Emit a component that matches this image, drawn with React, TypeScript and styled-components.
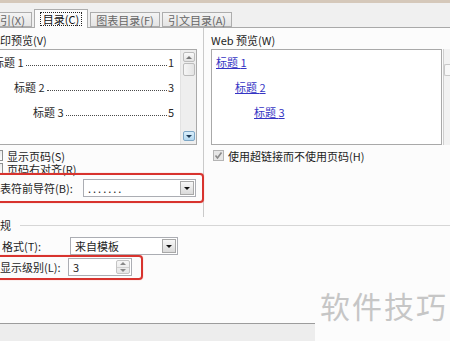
import styled, { createGlobalStyle } from "styled-components";

const GlobalStyle = createGlobalStyle`
  html, body {
    margin: 0;
    padding: 0;
    background: #fcfcfc;
  }
  body {
    font-family: "Noto Sans CJK SC", "Liberation Sans", sans-serif;
    font-size: 11px;
    color: #1e1e1e;
  }
`;

const Page = styled.div`
  width: 450px;
  height: 341px;
  overflow: hidden;
  display: flex;
  flex-direction: column;
  background: #fcfcfc;
`;

const TopStrip = styled.div`
  height: 3px;
  background: #d5c8ba;
`;

const Frame = styled.div`
  margin-left: -11px;
  width: 461px;
  flex: 1;
  display: flex;
  flex-direction: column;
`;

const TabBar = styled.div`
  height: 24px;
  box-sizing: content-box;
  background: #f0f0f0;
  border-bottom: 1px solid #a9a9a9;
  display: flex;
  align-items: flex-end;
  gap: 2px;
`;

const Tab = styled.div<{ $w: number; $active?: boolean; $first?: boolean }>`
  width: ${(p) => p.$w}px;
  height: ${(p) => (p.$active ? 19 : 15)}px;
  margin-bottom: ${(p) => (p.$active ? -1 : 0)}px;
  margin-left: ${(p) => (p.$first ? -7 : 0)}px;
  box-sizing: border-box;
  border: 1px solid #adadad;
  border-bottom: ${(p) => (p.$active ? "none" : "1px solid #adadad")};
  background: ${(p) =>
    p.$active ? "#fcfcfc" : "linear-gradient(#f4f4f4, #e4e4e4)"};
  color: ${(p) => (p.$active ? "#111" : "#666")};
  display: flex;
  align-items: center;
  justify-content: center;
  line-height: 12px;
  white-space: nowrap;
`;

const Focus = styled.span`
  outline: 1px dotted #222;
  padding: 0 2px;
`;

const TopRow = styled.div`
  display: flex;
  height: 189px;
`;

const LeftCol = styled.div`
  width: 216px;
  padding-top: 5px;
  display: flex;
  flex-direction: column;
`;

const RightCol = styled.div`
  flex: 1;
  border-left: 1px solid #cacaca;
  padding: 5px 0 0 7px;
  display: flex;
  flex-direction: column;
`;

const Label = styled.div`
  height: 14px;
  line-height: 14px;
  white-space: nowrap;
`;

const PreviewRow = styled.div`
  margin-top: 2px;
  height: 96px;
  display: flex;
  gap: 1px;
`;

const PreviewBox = styled.div<{ $w: number }>`
  width: ${(p) => p.$w}px;
  height: 96px;
  box-sizing: border-box;
  border: 1px solid #a9a9a9;
  background: #fff;
  display: flex;
`;

const Entries = styled.div`
  flex: 1;
  padding: 6px 6px 0 3px;
  display: flex;
  flex-direction: column;
  gap: 12px;
`;

const Entry = styled.div<{ $indent: number }>`
  display: flex;
  align-items: flex-end;
  height: 13px;
  line-height: 13px;
  padding-left: ${(p) => p.$indent}px;
  color: #2a2a2a;
  white-space: nowrap;
`;

const Leader = styled.span`
  flex: 1;
  border-bottom: 1px dotted #4a4a4a;
  margin: 0 1px 3px 2px;
`;

const WebEntry = styled.span<{ $indent: number }>`
  display: block;
  height: 13px;
  line-height: 13px;
  padding-left: ${(p) => p.$indent}px;
  color: #3535c4;
  text-decoration: underline;
  white-space: nowrap;
`;

const Scrollbar = styled.div`
  width: 15px;
  background: #eeeeee;
  border-left: 1px solid #e2e2e2;
  display: flex;
  flex-direction: column;
  align-items: center;
  padding: 2px 0 3px;
`;

const ScrollBtn = styled.div<{ $hover?: boolean }>`
  width: 12px;
  height: 10px;
  box-sizing: border-box;
  border: 1px solid ${(p) => (p.$hover ? "#7ea7c6" : "#bcbcbc")};
  border-radius: 2px;
  background: ${(p) =>
    p.$hover
      ? "linear-gradient(#d9eefb, #b4d8f0)"
      : "linear-gradient(#fafafa, #e2e2e2)"};
  display: flex;
  align-items: center;
  justify-content: center;
`;

const Thumb = styled.div`
  width: 12px;
  height: 13px;
  margin-top: 1px;
  box-sizing: border-box;
  border: 1px solid #bcbcbc;
  border-radius: 2px;
  background: linear-gradient(90deg, #f6f6f6, #e4e4e4);
`;

const Spacer = styled.div`
  flex: 1;
`;

const Arrow = styled.span<{ $up?: boolean; $color?: string }>`
  width: 0;
  height: 0;
  border-left: 3px solid transparent;
  border-right: 3px solid transparent;
  ${(p) =>
    p.$up
      ? `border-bottom: 3px solid ${p.$color || "#333"};`
      : `border-top: 3px solid ${p.$color || "#333"};`}
`;

const SideStrip = styled.div`
  width: 6px;
  background: #f2f2f2;
  border-left: 1px solid #cfcfcf;
  padding-top: 15px;
`;

const SideKnob = styled.div`
  height: 10px;
  border: 1px solid #c8c8c8;
  border-right: none;
  border-radius: 2px 0 0 2px;
  background: #f8f8f8;
`;

const CheckRow = styled.div<{ $offset: number; $top?: number }>`
  display: flex;
  align-items: center;
  gap: 4px;
  height: 13px;
  margin-left: ${(p) => p.$offset}px;
  margin-top: ${(p) => p.$top ?? 0}px;
  white-space: nowrap;
`;

const Check = styled.span<{ $disabled?: boolean }>`
  width: 11px;
  height: 11px;
  box-sizing: border-box;
  border: 1px solid ${(p) => (p.$disabled ? "#b4b4b4" : "#8e8f8f")};
  background: ${(p) =>
    p.$disabled ? "#e6e6e6" : "linear-gradient(135deg, #dcdcdc, #ffffff)"};
  display: flex;
  align-items: center;
  justify-content: center;
  flex: none;
`;

const Highlight = styled.div<{ $t: number; $r: number; $b: number; $l: number; $top: number }>`
  position: relative;
  width: fit-content;
  margin-top: ${(p) => p.$top}px;
  &::after {
    content: "";
    position: absolute;
    top: ${(p) => -p.$t}px;
    right: ${(p) => -p.$r}px;
    bottom: ${(p) => -p.$b}px;
    left: ${(p) => -p.$l}px;
    border: 2px solid #d8332e;
    border-radius: 4px;
    box-shadow: 0 0 1px #e87a76;
    pointer-events: none;
  }
`;

const FieldRow = styled.div<{ $top: number; $labelW: number }>`
  display: flex;
  align-items: center;
  height: 18px;
  margin-top: ${(p) => p.$top}px;
  & > ${Label} {
    width: ${(p) => p.$labelW}px;
    flex: none;
  }
`;

const Select = styled.div<{ $w: number }>`
  width: ${(p) => p.$w}px;
  height: 18px;
  box-sizing: border-box;
  border: 1px solid #abadb3;
  background: #fff;
  display: flex;
  align-items: center;
`;

const SelectText = styled.span<{ $spaced?: boolean }>`
  flex: 1;
  padding-left: 4px;
  letter-spacing: ${(p) => (p.$spaced ? "2px" : "0")};
  white-space: nowrap;
`;

const DropBtn = styled.div`
  width: 14px;
  height: 14px;
  margin-right: 1px;
  box-sizing: border-box;
  border: 1px solid #a8a8a8;
  background: linear-gradient(#f8f8f8, #dadada);
  display: flex;
  align-items: center;
  justify-content: center;
`;

const SpinBtns = styled.div`
  width: 14px;
  height: 14px;
  margin-right: 1px;
  display: flex;
  flex-direction: column;
  border: 1px solid #c4c4c4;
  box-sizing: border-box;
  border-radius: 2px;
  background: linear-gradient(#f6f6f6, #e6e6e6);
`;

const SpinHalf = styled.div`
  flex: 1;
  display: flex;
  align-items: center;
  justify-content: center;
  & + & {
    border-top: 1px solid #d0d0d0;
  }
`;

const GroupHeader = styled.div`
  display: flex;
  align-items: center;
  height: 14px;
  margin-top: 1px;
`;

const GroupLine = styled.div`
  flex: 1;
  border-top: 1px solid #d6d6d6;
  margin-left: 9px;
`;

const GroupBody = styled.div`
  padding-left: 11px;
`;

const Bottom = styled.div`
  flex: 1;
  display: flex;
`;

const BottomLeft = styled.div`
  width: 326px;
  display: flex;
  flex-direction: column;
`;

const ButtonStrip = styled.div`
  height: 17px;
  border-top: 1px solid #9c9c9c;
  background: #ededed;
`;

const Watermark = styled.div`
  margin: 14px 0 0 5px;
  font-size: 30px;
  line-height: 30px;
  letter-spacing: 2px;
  color: #c6c6c6;
  white-space: nowrap;
`;

const tocEntries = [
  { indent: 0, page: "1" },
  { indent: 21, page: "3" },
  { indent: 40, page: "5" },
];

export default function App() {
  return (
    <>
      <GlobalStyle />
      <Page>
        <TopStrip />
        <Frame>
          <TabBar>
            <Tab $w={50} $first>索引(X)</Tab>
            <Tab $w={54} $active>
              <Focus>目录(C)</Focus>
            </Tab>
            <Tab $w={70}>图表目录(F)</Tab>
            <Tab $w={70}>引文目录(A)</Tab>
          </TabBar>

          <TopRow>
            <LeftCol>
              <Label>打印预览(V)</Label>
              <PreviewRow>
                <PreviewBox $w={208}>
                  <Entries>
                    {tocEntries.map((e, i) => (
                      <Entry key={i} $indent={e.indent}>
                        <span>标题 {i + 1}</span>
                        <Leader />
                        <span>{e.page}</span>
                      </Entry>
                    ))}
                  </Entries>
                  <Scrollbar>
                    <ScrollBtn>
                      <Arrow $up $color="#777" />
                    </ScrollBtn>
                    <Thumb />
                    <Spacer />
                    <ScrollBtn $hover>
                      <Arrow $color="#1d3a55" />
                    </ScrollBtn>
                  </Scrollbar>
                </PreviewBox>
              </PreviewRow>
              <CheckRow $offset={3} $top={4}>
                <Check />
                显示页码(S)
              </CheckRow>
              <CheckRow $offset={3}>
                <Check />
                页码右对齐(R)
              </CheckRow>
              <Highlight $t={6} $r={8} $b={6} $l={12} $top={4}>
                <FieldRow $top={0} $labelW={94}>
                  <Label>制表符前导符(B):</Label>
                  <Select $w={113}>
                    <SelectText $spaced>.......</SelectText>
                    <DropBtn>
                      <Arrow $color="#111" />
                    </DropBtn>
                  </Select>
                </FieldRow>
              </Highlight>
            </LeftCol>

            <RightCol>
              <Label>Web 预览(W)</Label>
              <PreviewRow>
                <PreviewBox $w={231}>
                  <Entries>
                    {tocEntries.map((e, i) => (
                      <WebEntry key={i} $indent={e.indent === 0 ? 1 : e.indent - 1}>
                        标题 {i + 1}
                      </WebEntry>
                    ))}
                  </Entries>
                </PreviewBox>
                <SideStrip>
                  <SideKnob />
                </SideStrip>
              </PreviewRow>
              <CheckRow $offset={2} $top={4}>
                <Check $disabled>
                  <svg width="9" height="9" viewBox="0 0 9 9">
                    <path d="M1.5 4.5 L3.5 7 L7.5 1.5" fill="none" stroke="#8a8a8a" strokeWidth="1.6" />
                  </svg>
                </Check>
                使用超链接而不使用页码(H)
              </CheckRow>
            </RightCol>
          </TopRow>

          <GroupHeader>
            <Label>常规</Label>
            <GroupLine />
          </GroupHeader>
          <GroupBody>
            <FieldRow $top={5} $labelW={68}>
              <Label style={{ paddingLeft: 2 }}>格式(T):</Label>
              <Select $w={108}>
                <SelectText>来自模板</SelectText>
                <DropBtn>
                  <Arrow $color="#111" />
                </DropBtn>
              </Select>
            </FieldRow>
            <Highlight $t={3} $r={11} $b={4} $l={20} $top={3}>
              <FieldRow $top={0} $labelW={68}>
                <Label>显示级别(L):</Label>
                <Select $w={64}>
                  <SelectText>3</SelectText>
                  <SpinBtns>
                    <SpinHalf>
                      <Arrow $up $color="#888" />
                    </SpinHalf>
                    <SpinHalf>
                      <Arrow $color="#888" />
                    </SpinHalf>
                  </SpinBtns>
                </Select>
              </FieldRow>
            </Highlight>
          </GroupBody>

          <Bottom>
            <BottomLeft>
              <Spacer />
              <ButtonStrip />
            </BottomLeft>
            <Watermark>软件技巧</Watermark>
          </Bottom>
        </Frame>
      </Page>
    </>
  );
}
